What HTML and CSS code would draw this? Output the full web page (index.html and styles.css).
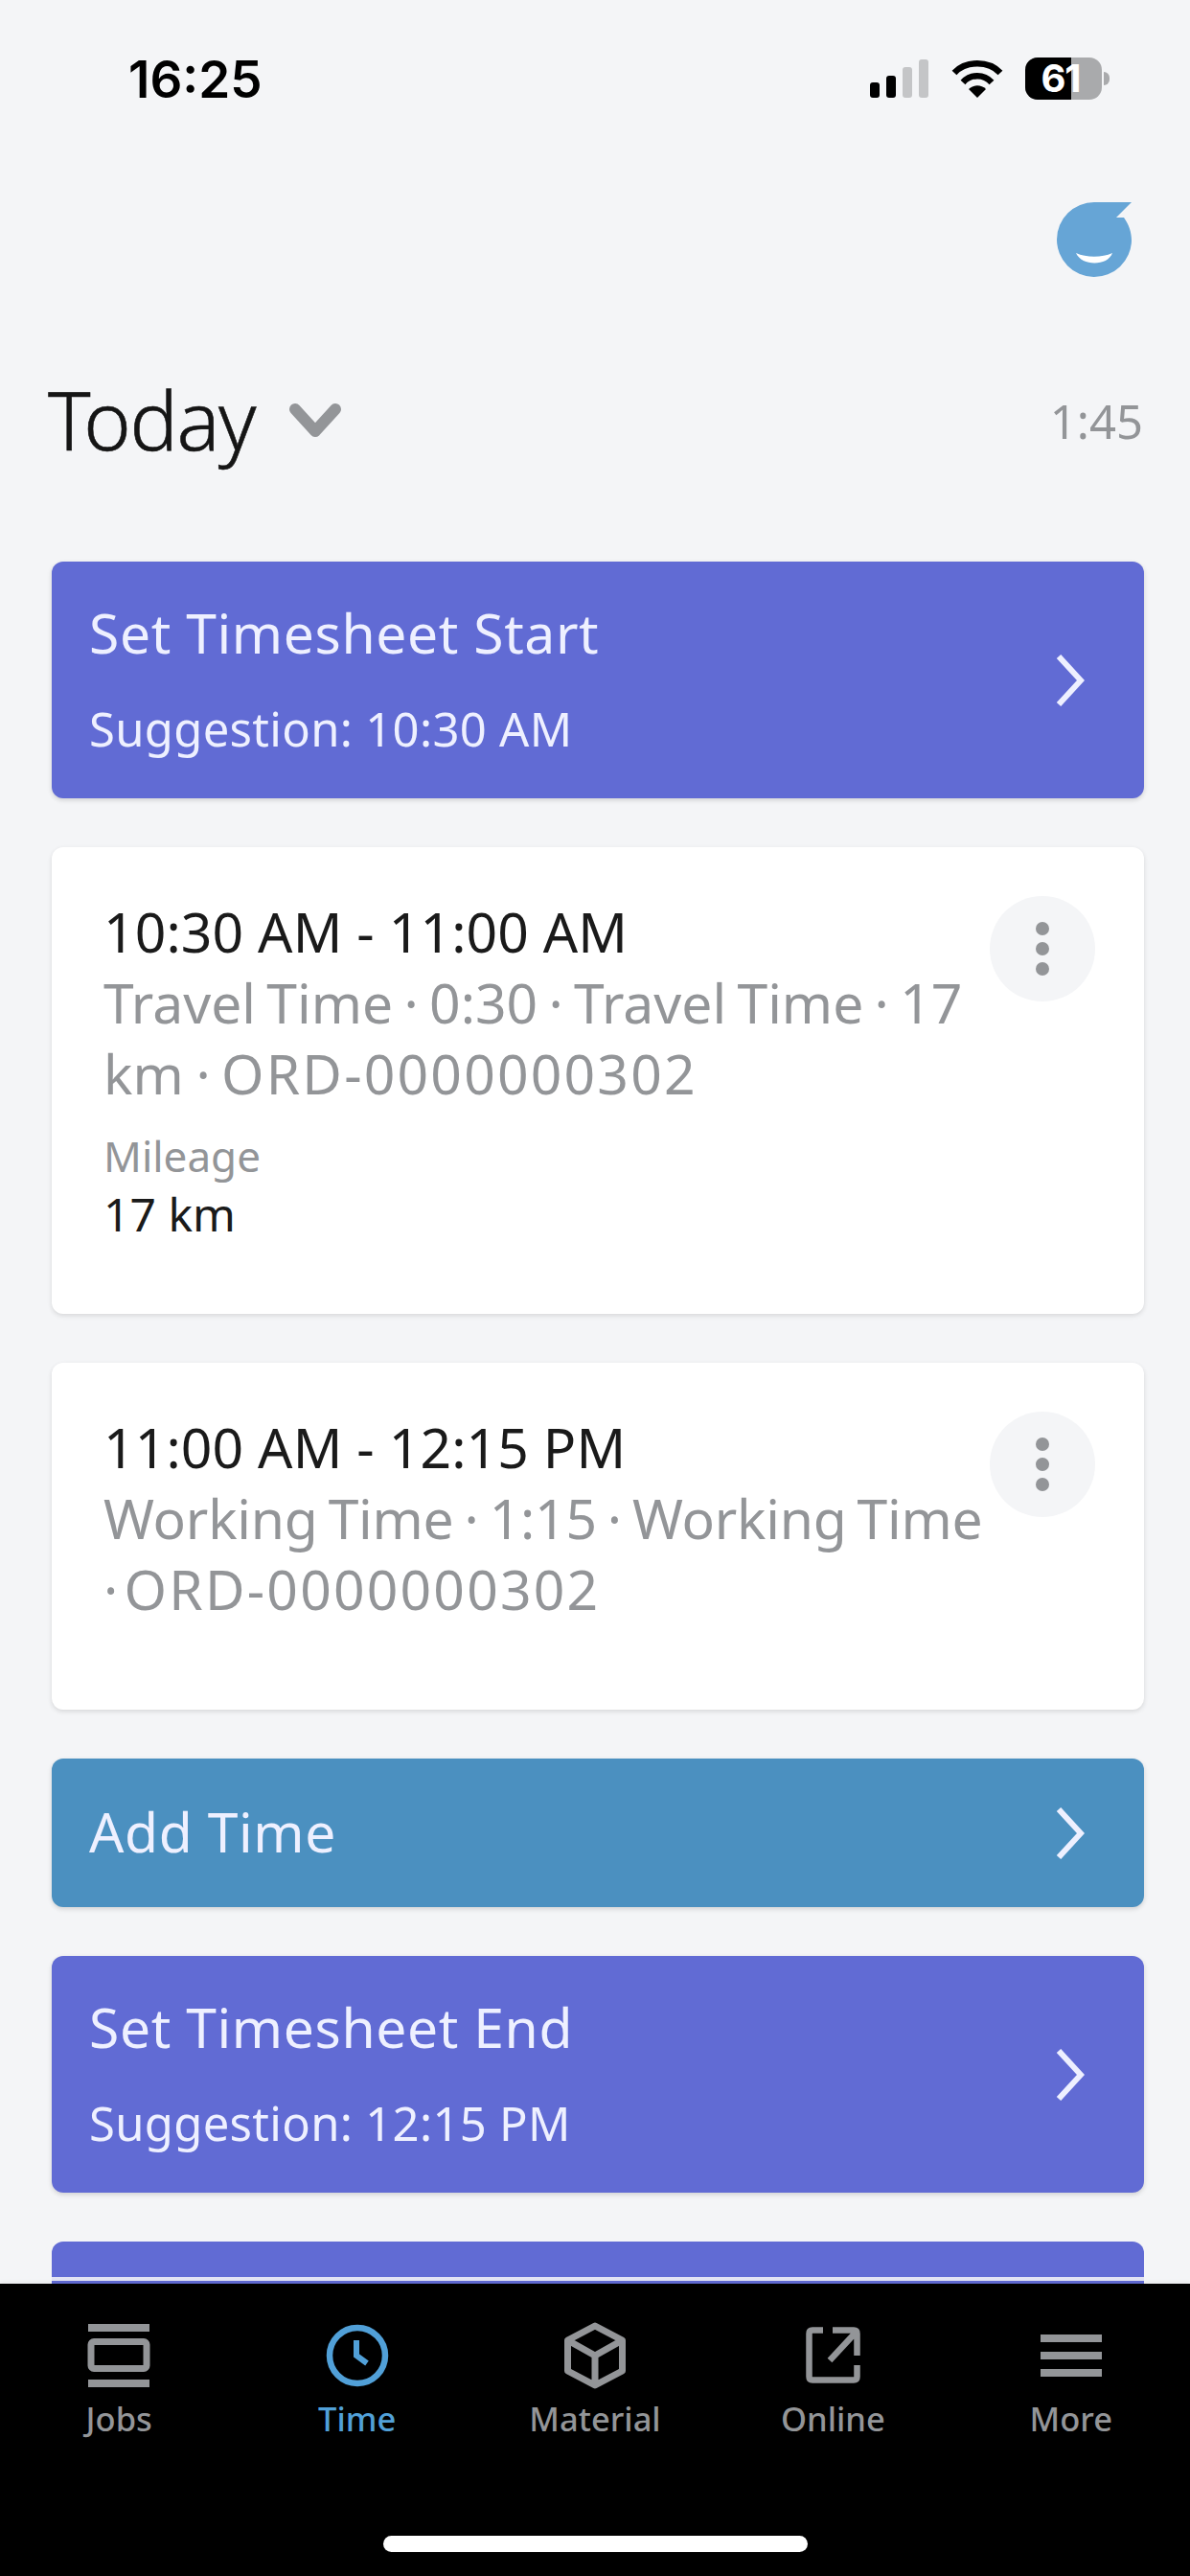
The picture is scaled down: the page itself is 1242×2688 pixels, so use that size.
FILE: index.html
```html
<!DOCTYPE html>
<html lang="en">
<head>
    <meta charset="UTF-8">
    <meta name="viewport" content="width=device-width, initial-scale=1.0">
    <title>Time</title>
    <link rel="stylesheet" href="styles.css">
</head>
<body>
    <div class="statusbar">
        <span class="clock">16:25</span>
        <div class="status-icons">
            <svg class="signal" width="62" height="40" viewBox="0 0 62 40">
                <rect x="0" y="24" width="10" height="16" rx="3" fill="#000"/>
                <rect x="17" y="17" width="10" height="23" rx="3" fill="#000"/>
                <rect x="34" y="8" width="10" height="32" rx="3" fill="#c4c5c7"/>
                <rect x="51" y="0" width="10" height="40" rx="3" fill="#c4c5c7"/>
            </svg>
            <svg class="wifi" width="54" height="40" viewBox="0 0 54 40">
                <path d="M27 40 L18 31 C23 26 31 26 36 31 Z" fill="#000"/>
                <path d="M12 24 C20 15 34 15 42 24" fill="none" stroke="#000" stroke-width="6.5"/>
                <path d="M3 14 C15 1 39 1 51 14" fill="none" stroke="#000" stroke-width="6.5"/>
            </svg>
            <div class="battery">
                <div class="battery-body">
                    <div class="battery-fill"></div>
                    <span class="battery-level">61</span>
                </div>
                <div class="battery-nub"></div>
            </div>
        </div>
    </div>

    <div class="main">
        <div class="logo-row">
            <svg width="80" height="80" viewBox="0 0 80 80">
                <path d="M40 1 L79 1 L63 17 L71 17 C76 24 79 32 79 41 A39 39 0 1 1 40 1 Z" fill="#66a5d6"/>
                <path d="M21 54 C32 59 48 59 59 54 C54 68 27 68 21 54 Z" fill="#fff"/>
            </svg>
        </div>

        <div class="day-row">
            <div class="day-left">
                <h1>Today</h1>
                <svg width="54" height="36" viewBox="0 0 54 36">
                    <path d="M6 6 L27 29 L48 6" fill="none" stroke="#939598" stroke-width="12" stroke-linecap="round" stroke-linejoin="round"/>
                </svg>
            </div>
            <span class="day-total">1:45</span>
        </div>

        <div class="list">
            <div class="action action-purple">
                <div class="action-text">
                    <div class="action-title">Set Timesheet Start</div>
                    <div class="action-sub">Suggestion: 10:30 AM</div>
                </div>
                <svg class="arrow" width="30" height="54" viewBox="0 0 30 54">
                    <path d="M3 2 L26 27 L3 52" fill="none" stroke="#eef0ff" stroke-width="6"/>
                </svg>
            </div>

            <div class="entry entry-tall">
                <div class="entry-text">
                    <div class="entry-time">10:30 AM - 11:00 AM</div>
                    <div class="entry-desc">Travel Time · 0:30 · Travel Time · 17<br><span class="tight-gap">km &nbsp;</span>· <span class="order-no">ORD-0000000302</span></div>
                    <div class="entry-label">Mileage</div>
                    <div class="entry-value">17 km</div>
                </div>
                <div class="more-btn"><i></i><i></i><i></i></div>
            </div>

            <div class="entry entry-short">
                <div class="entry-text">
                    <div class="entry-time">11:00 AM - 12:15 PM</div>
                    <div class="entry-desc"><span class="working-line">Working Time · 1:15 · Working Time</span><br><span class="tight-gap">· </span><span class="order-no">ORD-0000000302</span></div>
                </div>
                <div class="more-btn"><i></i><i></i><i></i></div>
            </div>

            <div class="action action-blue">
                <div class="action-title">Add Time</div>
                <svg class="arrow" width="30" height="54" viewBox="0 0 30 54">
                    <path d="M3 2 L26 27 L3 52" fill="none" stroke="#eef0ff" stroke-width="6"/>
                </svg>
            </div>

            <div class="action action-purple">
                <div class="action-text">
                    <div class="action-title">Set Timesheet End</div>
                    <div class="action-sub">Suggestion: 12:15 PM</div>
                </div>
                <svg class="arrow" width="30" height="54" viewBox="0 0 30 54">
                    <path d="M3 2 L26 27 L3 52" fill="none" stroke="#eef0ff" stroke-width="6"/>
                </svg>
            </div>

            <div class="action-cut">
                <div class="cut-line"></div>
            </div>
        </div>
    </div>

    <div class="tabbar">
        <div class="tabs">
            <div class="tab">
                <svg width="66" height="66" viewBox="0 0 66 66">
                    <rect x="1" y="0" width="64" height="8" fill="#939598"/>
                    <rect x="4" y="18.5" width="58" height="28" rx="3" fill="none" stroke="#939598" stroke-width="7"/>
                    <rect x="1" y="58" width="64" height="8" fill="#939598"/>
                </svg>
                <span>Jobs</span>
            </div>
            <div class="tab tab-active">
                <svg width="66" height="66" viewBox="0 0 66 66">
                    <circle cx="33" cy="33" r="29" fill="none" stroke="#51a0d8" stroke-width="6.5"/>
                    <path d="M32 17 V33 L43 41" fill="none" stroke="#51a0d8" stroke-width="6"/>
                </svg>
                <span>Time</span>
            </div>
            <div class="tab">
                <svg width="66" height="66" viewBox="0 0 66 66">
                    <path d="M33 2 L61.5 17 V49 L33 64 L4.5 49 V17 Z M4.5 17 L33 33 L61.5 17 M33 33 V64" fill="none" stroke="#939598" stroke-width="7" stroke-linejoin="round"/>
                </svg>
                <span>Material</span>
            </div>
            <div class="tab">
                <svg width="66" height="66" viewBox="0 0 66 66">
                    <path d="M23 6.5 H12 Q8.5 6.5 8.5 10 V55 Q8.5 58.5 12 58.5 H55 Q58.5 58.5 58.5 55 V43 M33 6.5 H55 Q58.5 6.5 58.5 10 V33 M56 10 L30 38" fill="none" stroke="#939598" stroke-width="6.5"/>
                </svg>
                <span>Online</span>
            </div>
            <div class="tab">
                <svg width="66" height="66" viewBox="0 0 66 66">
                    <rect x="1" y="11" width="64" height="8" fill="#939598"/>
                    <rect x="1" y="29" width="64" height="8" fill="#939598"/>
                    <rect x="1" y="47" width="64" height="8" fill="#939598"/>
                </svg>
                <span>More</span>
            </div>
        </div>
        <div class="home-bar"></div>
    </div>
</body>
</html>
```
FILE: styles.css
```css
* {
    box-sizing: border-box;
}

body {
    font-family: 'Noto Sans', 'Open Sans', sans-serif;
    display: flex;
    flex-direction: column;
    width: 1242px;
    height: 2688px;
    margin: 0;
    overflow: hidden;
    background-color: #f4f5f7;
    color: #1a1a1a;
}

.statusbar {
    display: flex;
    justify-content: space-between;
    align-items: center;
    flex: none;
    height: 100px;
    padding: 66px 84px 0 134px;
}

.clock {
    font-family: 'Inter', sans-serif;
    font-size: 53px;
    font-weight: 600;
    color: #000;
}

.status-icons {
    display: flex;
    align-items: center;
    margin-top: -2px;
}

.signal {
    margin-right: 23px;
}

.wifi {
    margin-right: 23px;
}

.battery {
    display: flex;
    align-items: center;
}

.battery-body {
    position: relative;
    display: flex;
    align-items: center;
    justify-content: center;
    width: 80px;
    height: 44px;
    padding-right: 6px;
    border-radius: 13px;
    background: #a9aaac;
}

.battery-fill {
    position: absolute;
    top: 0;
    left: 0;
    bottom: 0;
    width: 48px;
    border-radius: 13px 0 0 13px;
    background: #000;
}

.battery-level {
    position: relative;
    font-family: 'Inter', sans-serif;
    font-size: 40px;
    line-height: 40px;
    font-weight: 700;
    letter-spacing: -1px;
    color: #fff;
}

.battery-nub {
    width: 6px;
    height: 14px;
    margin-left: 2px;
    border-radius: 0 7px 7px 0;
    background: #a9aaac;
}

.main {
    flex: 1;
    min-height: 0;
    overflow: hidden;
}

.logo-row {
    display: flex;
    justify-content: flex-end;
    padding: 110px 60px 0 0;
}

.logo-row svg {
    display: block;
}

.day-row {
    display: flex;
    justify-content: space-between;
    align-items: center;
    height: 110px;
    margin-top: 92px;
    padding: 0 49px 0 50px;
}

.day-left {
    display: flex;
    align-items: center;
    gap: 36px;
}

.day-left svg {
    margin-top: 3px;
}

h1 {
    margin: 0;
    font-size: 84px;
    font-weight: 300;
    letter-spacing: -1.4px;
    -webkit-text-stroke: 0.6px #151515;
    color: #151515;
}

.day-total {
    margin-top: 3px;
    font-size: 49px;
    color: #939598;
}

.list {
    display: flex;
    flex-direction: column;
    gap: 51px;
    margin-top: 94px;
    padding: 0 48px 0 54px;
}

.action {
    display: flex;
    justify-content: space-between;
    align-items: center;
    flex: none;
    padding: 0 62px 0 39px;
    border-radius: 12px;
    color: #eef0ff;
    box-shadow: 0 2px 5px rgba(0,0,0,0.15);
}

.action-purple {
    height: 247px;
    background: #616bd4;
}

.action-blue {
    height: 155px;
    background: #4b90c0;
}

.action-blue .action-title {
    margin-bottom: 3px;
}

.action-cut {
    flex: none;
    height: 247px;
    padding-top: 37px;
    border-radius: 12px;
    background: #616bd4;
}

.cut-line {
    height: 4px;
    background: #e2e3f4;
}

.action-text {
    margin-bottom: 7px;
}

.action-title {
    font-size: 57px;
    line-height: 74px;
    letter-spacing: 0.6px;
}

.action-sub {
    margin-top: 33px;
    font-size: 49px;
    line-height: 60px;
    letter-spacing: 0.3px;
}

.arrow {
    display: block;
}

.entry {
    display: flex;
    align-items: flex-start;
    flex: none;
    padding: 51px 51px 0 54px;
    border-radius: 12px;
    background: #fff;
    box-shadow: 0 2px 5px rgba(0,0,0,0.12);
}

.entry-tall {
    height: 487px;
}

.entry-short {
    height: 362px;
}

.entry-text {
    flex: 1;
    min-width: 0;
}

.entry-time {
    font-size: 57px;
    line-height: 74px;
    letter-spacing: 0.1px;
}

.entry-desc {
    font-size: 57px;
    line-height: 74px;
    word-spacing: -3.5px;
    white-space: nowrap;
    color: #939598;
}

.working-line {
    letter-spacing: -0.25px;
}

.tight-gap {
    word-spacing: -8.5px;
}

.order-no {
    letter-spacing: 2.2px;
}

.entry-label {
    margin-top: 19px;
    font-size: 44px;
    line-height: 60px;
    color: #939598;
}

.entry-value {
    font-size: 48px;
    line-height: 62px;
}

.more-btn {
    display: flex;
    flex-direction: column;
    align-items: center;
    justify-content: center;
    gap: 7px;
    flex: none;
    width: 110px;
    height: 110px;
    border-radius: 50%;
    background: #f4f5f7;
}

.more-btn i {
    width: 14px;
    height: 14px;
    border-radius: 50%;
    background: #939598;
}

.tabbar {
    position: relative;
    flex: none;
    height: 305px;
    background: #000;
    box-shadow: 0 -2px 4px rgba(0,0,0,0.05);
}

.tabs {
    display: grid;
    grid-template-columns: repeat(5, 1fr);
    height: 263px;
    padding-top: 42px;
}

.tab {
    display: flex;
    flex-direction: column;
    align-items: center;
    color: #939598;
    font-size: 34.5px;
    font-weight: 500;
}

.tab svg {
    display: block;
    overflow: visible;
}

.tab span {
    margin-top: 9px;
    line-height: 48px;
}

.tab-active {
    color: #51a0d8;
}

.home-bar {
    width: 443px;
    height: 17px;
    margin: 0 auto;
    border-radius: 9px;
    background: #fff;
}
```
